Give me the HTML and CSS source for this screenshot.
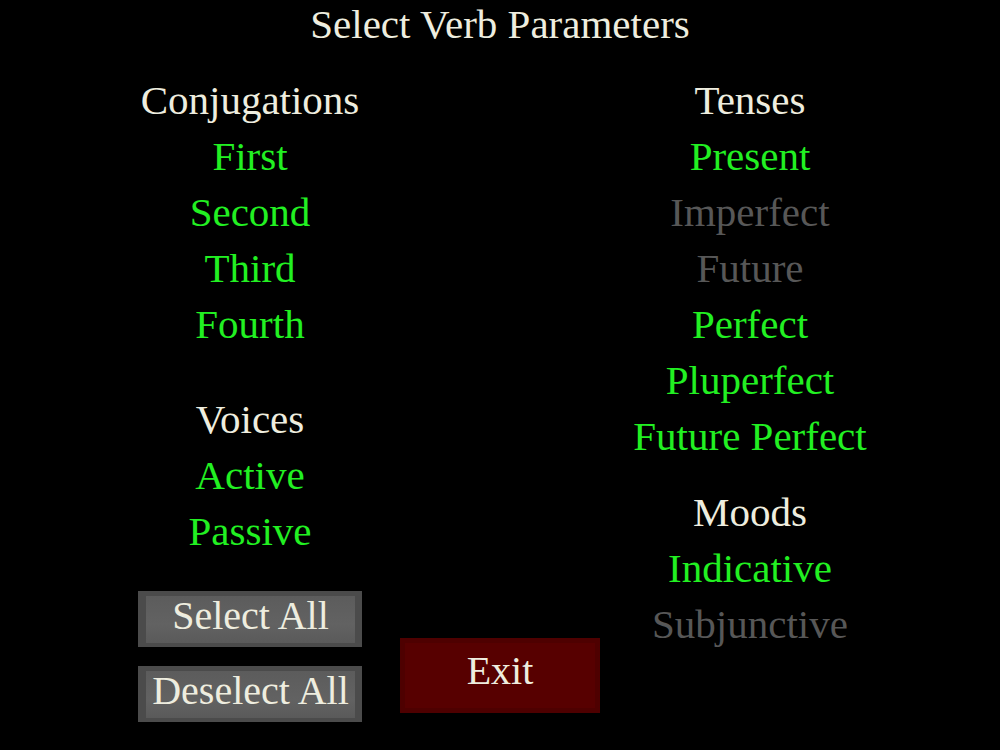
FILE: index.html
```html
<!DOCTYPE html>
<html lang="en">
<head>
  <meta charset="UTF-8">
  <meta name="viewport" content="width=device-width, initial-scale=1.0">
  <title>Select Verb Parameters</title>
  <link rel="stylesheet" href="styles.css">
</head>
<body>

  <h1 class="title">Select Verb Parameters</h1>

  <main class="panel">
    <div class="col col-left">
      <div class="group group-left">
        <div class="heading">Conjugations</div>
        <div class="item on">First</div>
        <div class="item on">Second</div>
        <div class="item on">Third</div>
        <div class="item on">Fourth</div>
      </div>

      <div class="group">
        <div class="heading">Voices</div>
        <div class="item on">Active</div>
        <div class="item on">Passive</div>
      </div>

      <div class="actions">
        <button class="btn btn-gray" type="button">Select All</button>
        <button class="btn btn-gray" type="button">Deselect All</button>
      </div>
    </div>

    <div class="col col-right">
      <div class="group group-right">
        <div class="heading">Tenses</div>
        <div class="item on">Present</div>
        <div class="item off">Imperfect</div>
        <div class="item off">Future</div>
        <div class="item on">Perfect</div>
        <div class="item on">Pluperfect</div>
        <div class="item on">Future Perfect</div>
      </div>

      <div class="group">
        <div class="heading">Moods</div>
        <div class="item on">Indicative</div>
        <div class="item off">Subjunctive</div>
      </div>
    </div>

    <button class="btn btn-exit" type="button">Exit</button>
  </main>

</body>
</html>
```

FILE: styles.css
```css
body {
  margin: 0;
  background-color: #000;
  color: #eeeddf;
  font-family: 'Liberation Serif', 'Times New Roman', serif;
  font-size: 41px;
}

.title {
  margin: 0;
  font-size: 41px;
  font-weight: normal;
  line-height: 48px;
  text-align: center;
}

.panel {
  display: grid;
  grid-template-columns: 500px 500px;
  margin-top: 24px;
}

.col {
  grid-row: 1;
  display: flex;
  flex-direction: column;
  align-items: center;
}

.col-left {
  grid-column: 1;
}

.col-right {
  grid-column: 2;
}

.group {
  display: flex;
  flex-direction: column;
  align-items: center;
}

.group-left {
  margin-bottom: 39px;
}

.group-right {
  margin-bottom: 20px;
}

.heading,
.item {
  line-height: 56px;
  white-space: nowrap;
}

.item.on {
  color: #22f022;
}

.item.off {
  color: #575757;
}

.actions {
  display: flex;
  flex-direction: column;
  gap: 19px;
  margin-top: 32px;
}

.btn {
  display: flex;
  align-items: center;
  justify-content: center;
  box-sizing: border-box;
  margin: 0;
  padding: 0 0 9px 0;
  font-family: inherit;
  font-size: 40px;
  color: #eeeddf;
  cursor: pointer;
}

.btn-gray {
  width: 224px;
  height: 56px;
  border-style: solid;
  border-color: #4b4b4b;
  border-width: 5px 7px 4px 8px;
  background: linear-gradient(#5c5c5c, #626262 60%, #5a5a5a);
}

.btn-exit {
  grid-column: 1 / 3;
  grid-row: 1;
  align-self: end;
  justify-self: center;
  width: 200px;
  height: 75px;
  margin-bottom: 9px;
  padding-bottom: 11px;
  border: 5px solid #4e0000;
  background-color: #570000;
}
```
